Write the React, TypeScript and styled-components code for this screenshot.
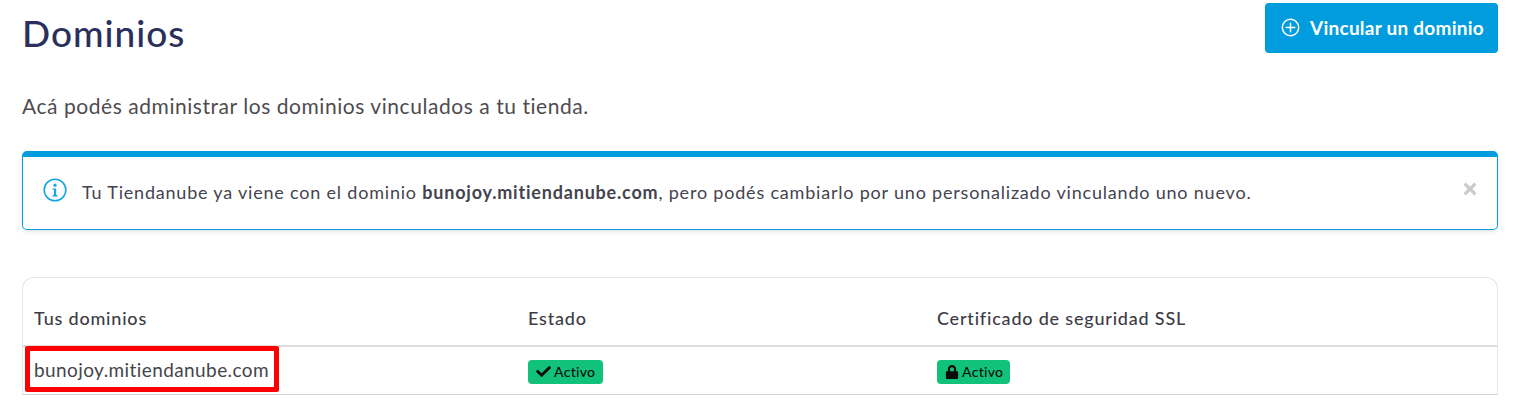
import React from "react";
import styled, { createGlobalStyle } from "styled-components";
import { FaCheck, FaLock, FaTimes } from "react-icons/fa";

const GlobalStyle = createGlobalStyle`
    html, body {
        margin: 0;
        padding: 0;
        background: #fff;
        overflow: hidden;
    }
    body {
        font-family: "Lato", "Liberation Sans", sans-serif;
    }
`;

const Page = styled.div`
    width: 1515px;
    height: 401px;
    box-sizing: border-box;
    padding: 3px 17px 0 22px;
    overflow: hidden;
`;

const Header = styled.div`
    display: flex;
    justify-content: space-between;
    align-items: flex-start;
    height: 50px;
`;

const Title = styled.h1`
    margin: 8px 0 0;
    font-size: 37px;
    line-height: 44px;
    font-weight: 500;
    color: #2a2f5c;
    letter-spacing: 1px;
`;

const LinkButton = styled.button`
    display: flex;
    align-items: center;
    gap: 10px;
    width: 233px;
    height: 50px;
    box-sizing: border-box;
    padding: 0 0 2px 16px;
    border: 0;
    border-radius: 4px;
    background: #009cdd;
    color: #fff;
    font-family: inherit;
    font-size: 19px;
    font-weight: 700;
    letter-spacing: 0.25px;
    white-space: nowrap;
`;

const Description = styled.p`
    margin: 40px 0 0;
    font-size: 21px;
    line-height: 26px;
    color: #4f4b50;
    letter-spacing: 0.55px;
`;

const Alert = styled.div`
    display: flex;
    align-items: center;
    height: 79px;
    margin-top: 32px;
    box-sizing: border-box;
    padding: 0 18px 0 20px;
    border: 1px solid #009cdd;
    border-top: 6px solid #009cdd;
    border-radius: 5px;
    box-shadow: 0 2px 4px rgba(0, 0, 0, 0.1);
    color: #44444f;
    font-size: 18px;
    letter-spacing: 0.8px;
`;

const AlertIcon = styled.span`
    display: flex;
    margin-bottom: 6px;
`;

const AlertText = styled.span`
    flex: 1;
    margin-left: 15px;
    white-space: nowrap;
    padding-bottom: 2px;
`;

const Close = styled.span`
    display: flex;
    color: #cbcbcb;
    font-size: 18px;
    margin-bottom: 9px;
`;

const Table = styled.div`
    margin-top: 47px;
    border: 1px solid #e6e6e6;
    border-bottom: 0;
    border-radius: 12px 12px 0 0;
`;

const Row = styled.div<{ $head?: boolean }>`
    display: grid;
    grid-template-columns: 494px 409px 1fr;
    align-items: center;
    box-sizing: border-box;
    height: ${p => (p.$head ? "69px" : "48px")};
    border-bottom: ${p => (p.$head ? "2px solid #dfdfdf" : "1px solid #d4d4d4")};
`;

const HeadCell = styled.div`
    padding: 13px 0 0 11px;
    font-size: 18px;
    font-weight: 500;
    color: #3c3c46;
    letter-spacing: 0.8px;
`;

const Cell = styled.div`
    position: relative;
    padding-left: 11px;
    font-size: 19px;
    line-height: 23px;
    color: #45454c;
    letter-spacing: 0.41px;
    white-space: nowrap;
`;

const DomainCell = styled(Cell)`
    padding-bottom: 2px;
`;

// red annotation drawn over the first cell
const Highlight = styled.div`
    position: absolute;
    left: 2px;
    top: -12px;
    width: 254px;
    height: 46px;
    box-sizing: border-box;
    border: 5px solid #fe0000;
    border-radius: 2px;
`;

const Badge = styled.span<{ $width: number }>`
    display: inline-flex;
    align-items: center;
    gap: 3px;
    width: ${p => p.$width}px;
    height: 24px;
    box-sizing: border-box;
    padding-left: 8px;
    margin-top: 2px;
    border-radius: 4px;
    background: #10c27a;
    color: #0c0c0c;
    font-size: 14px;
    font-weight: 500;
    letter-spacing: 0.3px;
    vertical-align: top;
`;

function PlusCircleIcon() {
    return <svg width="19" height="19" viewBox="0 0 19 19" fill="none" stroke="#fff" strokeWidth="1.5" strokeLinecap="round">
        <circle cx="9.5" cy="9.5" r="8.2" />
        <path d="M9.5 5.2v8.6M5.2 9.5h8.6" />
    </svg>;
}

function InfoIcon() {
    return <svg width="24" height="24" viewBox="0 0 24 24" fill="none">
        <circle cx="12" cy="12" r="10.8" stroke="#1ba5e0" strokeWidth="1.6" />
        <circle cx="12" cy="7.2" r="1.6" fill="#1ba5e0" />
        <path d="M9.6 10.4h3.6v6.6h1.3v1.4H9.6V17h1.4v-5.2H9.6z" fill="#1ba5e0" />
    </svg>;
}

export default function App(): JSX.Element {
    return <Page>
        <GlobalStyle />
        <Header>
            <Title>Dominios</Title>
            <LinkButton><PlusCircleIcon />Vincular un dominio</LinkButton>
        </Header>
        <Description>Acá podés administrar los dominios vinculados a tu tienda.</Description>
        <Alert>
            <AlertIcon><InfoIcon /></AlertIcon>
            <AlertText>Tu Tiendanube ya viene con el dominio <b>bunojoy.mitiendanube.com</b>, pero podés cambiarlo por uno personalizado vinculando uno nuevo.</AlertText>
            <Close><FaTimes /></Close>
        </Alert>
        <Table>
            <Row $head>
                <HeadCell>Tus dominios</HeadCell>
                <HeadCell>Estado</HeadCell>
                <HeadCell>Certificado de seguridad SSL</HeadCell>
            </Row>
            <Row>
                <DomainCell>bunojoy.mitiendanube.com<Highlight /></DomainCell>
                <Cell><Badge $width={75}><FaCheck size={15} />Activo</Badge></Cell>
                <Cell><Badge $width={73}><FaLock size={14} />Activo</Badge></Cell>
            </Row>
        </Table>
    </Page>;
}
